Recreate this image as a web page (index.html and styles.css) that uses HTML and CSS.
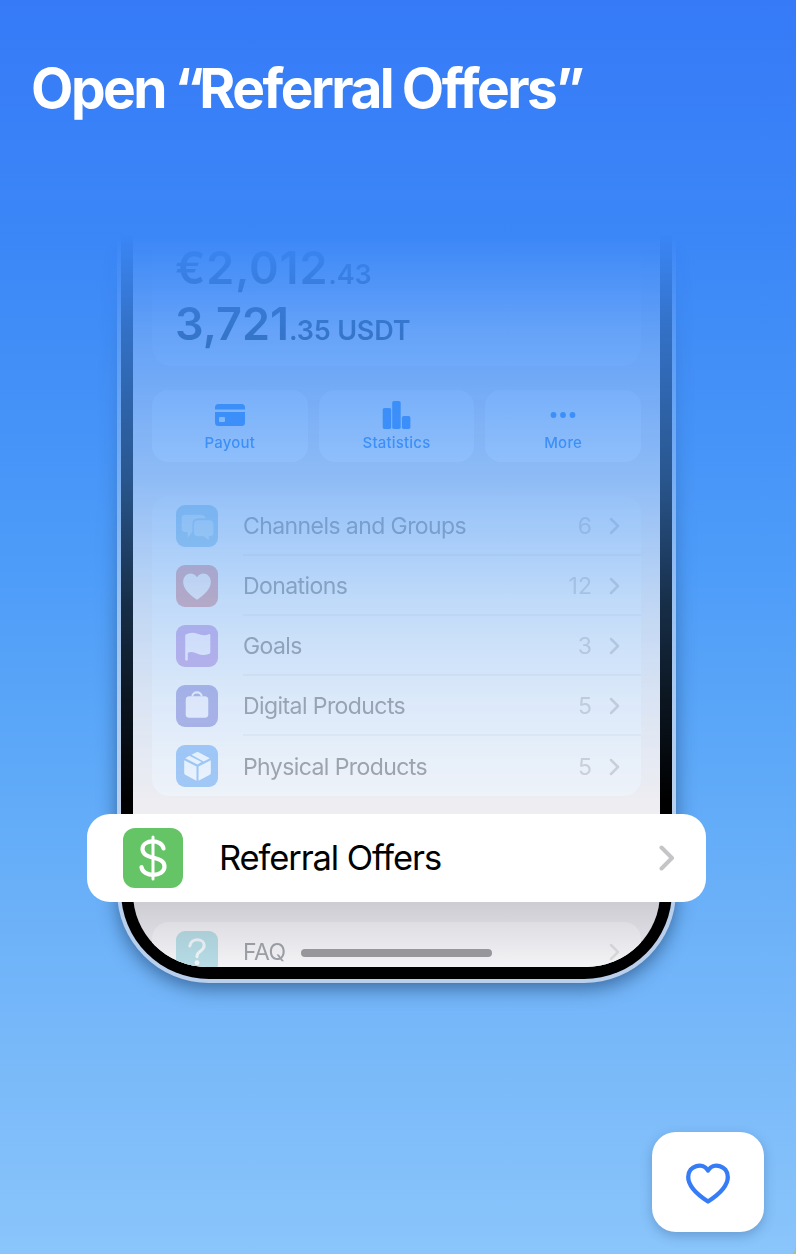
FILE: index.html
```html
<!DOCTYPE html>
<html lang="en">
<head>
<meta charset="utf-8">
<title>Referral Offers</title>
<link rel="stylesheet" href="styles.css">
</head>
<body>
<main class="page">
  <h1 class="title">Open <span class="quote">“</span>Referral Offers”</h1>
  <section class="scene">
    <div class="fade">
      <div class="phone">
        <div class="bezel">
          <div class="screen">
            <div class="balance">
              <div class="amount euro">€2,012<span class="minor">.43</span></div>
              <div class="amount usdt">3,721<span class="minor">.35 USDT</span></div>
            </div>
            <div class="actions">
              <div class="action">
                <svg width="32" height="30" viewBox="0 0 32 30" fill="currentColor"><path d="M1 8V7.5A3.5 3.5 0 0 1 4.500 4h23A3.500 3.500 0 0 1 31 7.500V9.500H1z"/><path fill-rule="evenodd" d="M1 12h30v10.500a3.500 3.500 0 0 1-3.500 3.500h-23A3.500 3.500 0 0 1 1 22.500zM6 17a1 1 0 0 0-1 1v3a1 1 0 0 0 1 1h4a1 1 0 0 0 1-1v-3a1 1 0 0 0-1-1z"/></svg>
                <span>Payout</span>
              </div>
              <div class="action">
                <svg width="32" height="30" viewBox="0 0 32 30" fill="currentColor"><rect x="1.700" y="8" width="8.500" height="21" rx="1.800"/><rect x="11.200" y="1" width="8.500" height="28" rx="1.800"/><rect x="20.900" y="16" width="8.500" height="13" rx="1.800"/></svg>
                <span>Statistics</span>
              </div>
              <div class="action">
                <svg width="32" height="30" viewBox="0 0 32 30" fill="currentColor"><circle cx="6.500" cy="15" r="2.900"/><circle cx="16" cy="15" r="2.900"/><circle cx="25.500" cy="15" r="2.900"/></svg>
                <span>More</span>
              </div>
            </div>
            <div class="list">
              <div class="row">
                <svg class="icon cyan" viewBox="0 0 41 41"><path fill="#fff" d="M8.500 9.500h15q5 0 5.500 3.500h-7q-6 0-6 6V26l-4.500 6v-5.500H9.500Q5.500 26.500 5.500 23v-9.500q0-4 3-4z"/><path fill="#fff" d="M21.500 15h11q4 0 4 4v7.500q0 4-4 4h-.5v4l-5-4h-5.500q-4 0-4-4V19q0-4 4-4z"/></svg>
                <div class="cell"><span>Channels and Groups</span><span class="count">6</span><svg class="chev" viewBox="0 0 11 18"><path d="M2 2l7 7-7 7"/></svg></div>
              </div>
              <div class="row">
                <svg class="icon red" viewBox="0 0 41 41"><path fill="#fff" d="M20.500 34C15 30 7 24 7 16.500 7 8 16.500 5.500 20.500 12 24.500 5.500 34 8 34 16.500 34 24 26 30 20.500 34z"/></svg>
                <div class="cell"><span>Donations</span><span class="count">12</span><svg class="chev" viewBox="0 0 11 18"><path d="M2 2l7 7-7 7"/></svg></div>
              </div>
              <div class="row">
                <svg class="icon purple" viewBox="0 0 41 41"><path fill="#fff" d="M9 9.500Q15 6 21 8.500T32 9q1.500-.5 1.500 1v16.500q0 1-1 1.500-6 2.500-11.500 0-5-2.500-9.500-1V34q-1.200 2-2.500 0z"/></svg>
                <div class="cell"><span>Goals</span><span class="count">3</span><svg class="chev" viewBox="0 0 11 18"><path d="M2 2l7 7-7 7"/></svg></div>
              </div>
              <div class="row">
                <svg class="icon indigo" viewBox="0 0 41 41"><path fill="none" stroke="#fff" stroke-width="2" d="M16 11a4.500 3.800 0 0 1 9 0"/><rect x="9.500" y="11" width="22" height="21" rx="3.500" fill="#fff"/></svg>
                <div class="cell"><span>Digital Products</span><span class="count">5</span><svg class="chev" viewBox="0 0 11 18"><path d="M2 2l7 7-7 7"/></svg></div>
              </div>
              <div class="row">
                <svg class="icon blue" viewBox="0 0 41 41"><g fill="#fff"><path d="M8 15l12 6v14L9 29q-1-.6-1-2zM34 15l-12 6v14l11-6q1-.6 1-2z"/><path d="M9 13l4-2.500 12 6-4 2.500zM15 9.500l5-2.500q1-.4 2 0l11 6-6 3z"/></g></svg>
                <div class="cell"><span>Physical Products</span><span class="count">5</span><svg class="chev" viewBox="0 0 11 18"><path d="M2 2l7 7-7 7"/></svg></div>
              </div>
            </div>
            <div class="list faq">
              <div class="row">
                <svg class="icon teal" viewBox="0 0 41 41"><path fill="none" stroke="#fff" stroke-width="3" stroke-linecap="round" d="M13.500 14.500c1-8 14-7.500 14-.5 0 6-7 5.500-7 10.500v.5"/><circle cx="20.500" cy="31" r="2.400" fill="#fff"/></svg>
                <div class="cell"><span>FAQ</span><span class="count"></span><svg class="chev" viewBox="0 0 11 18"><path d="M2 2l7 7-7 7"/></svg></div>
              </div>
            </div>
            <div class="shade"></div>
            <div class="home"></div>
          </div>
        </div>
      </div>
    </div>
    <div class="callout">
      <svg class="dollar" viewBox="0 0 60 60"><g fill="none" stroke="#fff" stroke-linecap="round"><path stroke-width="3" d="M30 9v42"/><path stroke-width="4.200" d="M40.500 20.500C39 11 19.500 11 19.500 21c0 11.500 22 6 22 17.500 0 11-22 11-23 .5"/></g></svg>
      <span class="callout-label">Referral Offers</span>
      <svg class="callout-chev" viewBox="0 0 16 26"><path d="M2.500 2.500L13 13 2.500 23.500"/></svg>
    </div>
  </section>
  <button class="like" aria-label="Like"><svg width="48" height="48" viewBox="0 0 48 48"><path d="M24 41.500C17 37 4.200 28.500 4.200 17 4.200 5 19.500 2 24 10.500 28.500 2 43.800 5 43.800 17 43.800 28.500 31 37 24 41.500z"/></svg></button>
</main>
</body>
</html>
```
FILE: styles.css
```css
* { box-sizing: border-box; }
body { margin: 0; background: #a9bc9c; font-family: Inter, "Liberation Sans", sans-serif; }
.page {
  position: relative;
  height: 1254px;
  overflow: hidden;
  border-bottom-right-radius: 4px 14px;
  background: linear-gradient(#367af7 0%, #3b87f7 19%, #4d9cf9 45%, #61abf8 64%, #74b6f9 80%, #8ac5fb 100%);
}
.title {
  margin: 0;
  height: 230px;
  padding: 53px 0 0 31px;
  font-size: 55px;
  line-height: 70px;
  font-weight: 650;
  letter-spacing: -2.5px;
  word-spacing: -1px;
  color: #fff;
  white-space: nowrap;
}
.quote { letter-spacing: -5px; }
.scene { position: relative; height: 850px; }
.fade {
  height: 850px;
  padding-left: 117px;
  overflow: hidden;
  -webkit-mask-image: linear-gradient(transparent 4px, rgba(0,0,0,.2) 100px, rgba(0,0,0,.43) 250px, rgba(0,0,0,.7) 370px, rgba(0,0,0,.87) 470px, #000 570px);
  mask-image: linear-gradient(transparent 4px, rgba(0,0,0,.2) 100px, rgba(0,0,0,.43) 250px, rgba(0,0,0,.7) 370px, rgba(0,0,0,.87) 470px, #000 570px);
}
.phone {
  width: 559px;
  height: 753px;
  padding: 0 4px 4px;
  border-radius: 0 0 92px 92px;
  background: #b9cfeb;
  box-shadow: 0 6px 18px rgba(10,40,80,.5);
}
.bezel {
  height: 749px;
  padding: 0 12px 12px;
  border-radius: 0 0 88px 88px;
  background: #000;
}
.screen {
  position: relative;
  height: 737px;
  padding: 0 19px;
  overflow: hidden;
  border-radius: 0 0 74px 74px;
  background: #ededf2;
}
.balance {
  height: 136px;
  padding: 10px 23px 0;
  border-radius: 0 0 20px 20px;
  background: #f8f9ff;
}
.amount {
  height: 56px;
  font-size: 45px;
  line-height: 56px;
  font-weight: 600;
  color: #0c1a20;
  white-space: nowrap;
}
.euro { letter-spacing: .8px; }
.minor { font-size: 27px; letter-spacing: -.2px; }
.actions { display: flex; gap: 11px; margin-top: 24px; }
.action {
  flex: 1;
  height: 72px;
  padding-top: 10px;
  display: flex;
  flex-direction: column;
  align-items: center;
  border-radius: 16px;
  background: #fafcff;
  color: #2c88f8;
  font-size: 15px;
  line-height: 25px;
  font-weight: 500;
  letter-spacing: .2px;
}
.list { margin-top: 34px; border-radius: 17px; background: #eff3f9; }
.row { display: flex; gap: 25px; height: 60px; padding-left: 24px; align-items: center; }
.icon { width: 42px; height: 42px; flex: none; border-radius: 9px; }
.icon path, .icon rect, .icon circle { opacity: .8; }
.cyan { background: #aad0ea; }
.cyan path { opacity: .4; }
.red { background: #dcadb4; }
.purple { background: #c8b3e7; }
.indigo { background: #b0b3e4; }
.blue { background: #a2c8f5; }
.teal { background: #b8dfe8; }
.cell {
  flex: 1;
  display: flex;
  align-items: center;
  height: 60px;
  padding-top: 2px;
  font-size: 23px;
  letter-spacing: -.58px;
  color: #a0a3a9;
  border-bottom: 2px solid #e6ebf3;
}
.row:last-child .cell { border-bottom: 0; }
.count { margin-left: auto; color: #ced1d8; letter-spacing: 0; }
.chev { width: 11px; height: 18px; margin: 0 21px 0 17px; fill: none; stroke: #ced1d8; stroke-width: 2.5; stroke-linecap: round; stroke-linejoin: round; }
.faq { margin-top: 126px; background: #f6f6f9; }
.faq .cell { padding-top: 0; }
.faq .chev { stroke: #dedee2; }
.shade {
  position: absolute;
  left: 0;
  right: 0;
  top: 671px;
  height: 66px;
  background: linear-gradient(rgba(60,55,70,.18), rgba(60,55,70,.015));
}
.home { position: absolute; left: 168px; bottom: 10px; width: 191px; height: 8px; border-radius: 4px; background: #97979b; }
.callout {
  position: absolute;
  left: 87px;
  top: 583.5px;
  width: 619px;
  height: 88px;
  padding: 0 31px 0 36px;
  display: flex;
  align-items: center;
  border-radius: 23px;
  background: #fff;
}
.dollar { width: 60px; height: 60px; border-radius: 12px; background: #65c466; }
.callout-label { margin-left: 36px; font-size: 34.5px; letter-spacing: -1.1px; color: #000; }
.callout-chev { width: 16px; height: 26px; margin-left: auto; fill: none; stroke: #c5c5c8; stroke-width: 4; stroke-linecap: round; stroke-linejoin: round; }
.like {
  position: absolute;
  right: 32px;
  bottom: 22px;
  width: 112px;
  height: 100px;
  padding: 4px 0 0;
  display: grid;
  place-items: center;
  border: 0;
  border-radius: 24px;
  background: #fff;
  box-shadow: 0 4px 12px rgba(30,70,120,.3);
}
.like path { fill: none; stroke: #367cf6; stroke-width: 4.3; stroke-linejoin: round; }
```
